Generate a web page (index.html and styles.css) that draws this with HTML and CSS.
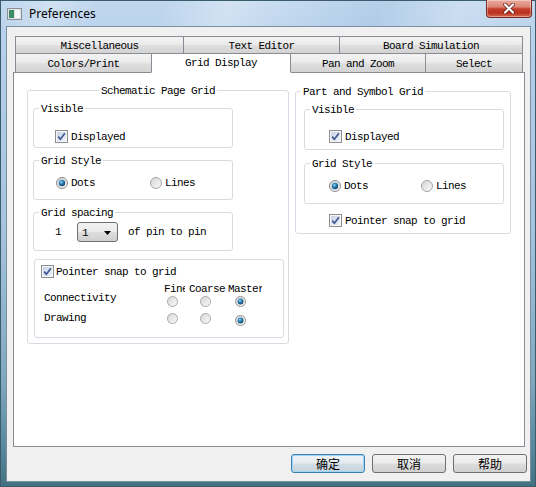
FILE: index.html
```html
<!DOCTYPE html>
<html>
<head>
<meta charset="utf-8">
<title>Preferences</title>
<link rel="stylesheet" href="styles.css">
</head>
<body>
<svg class="defs" width="0" height="0" aria-hidden="true">
  <defs>
    <linearGradient id="cbfill" x1="0" y1="0" x2="1" y2="1">
      <stop offset="0" stop-color="#c9d3e6"/>
      <stop offset="1" stop-color="#eef2f8"/>
    </linearGradient>
    <linearGradient id="radbg" x1="0" y1="0" x2="1" y2="1">
      <stop offset="0" stop-color="#d4d4d4"/>
      <stop offset="1" stop-color="#fbfbfb"/>
    </linearGradient>
    <radialGradient id="raddot" cx="0.4" cy="0.35" r="0.7">
      <stop offset="0" stop-color="#8fd8f5"/>
      <stop offset="0.45" stop-color="#2a80b3"/>
      <stop offset="1" stop-color="#123f63"/>
    </radialGradient>
    <symbol id="cbx" viewBox="0 0 13 13">
      <rect x="0.5" y="0.5" width="12" height="12" fill="#f6f6f6" stroke="#8e8f8f"/>
      <rect x="2" y="2" width="9" height="9" fill="url(#cbfill)"/>
      <path d="M3.2 6.6 L5.4 9.2 L9.9 3.3" stroke="#3e5591" stroke-width="1.7" fill="none"/>
    </symbol>
    <symbol id="radon" viewBox="0 0 12 12">
      <circle cx="6" cy="6" r="5.5" fill="url(#radbg)" stroke="#8c8c8c"/>
      <circle cx="6" cy="6" r="3.2" fill="url(#raddot)"/>
    </symbol>
    <symbol id="radoff" viewBox="0 0 12 12">
      <circle cx="6" cy="6" r="5.5" fill="url(#radbg)" stroke="#a4a4a4"/>
    </symbol>
  </defs>
</svg>

<div class="window">
  <div class="titlebar">
    <svg class="app-icon" width="15" height="12" viewBox="0 0 15 12">
      <rect x="0.5" y="0.5" width="14" height="11" fill="#dfe3e6" stroke="#8b9197"/>
      <rect x="2" y="2" width="5" height="8" fill="#3d8d68"/>
      <rect x="8" y="2" width="5" height="8" fill="#f5f7f8"/>
    </svg>
    <span class="title">Preferences</span>
    <div class="close">
      <svg width="12" height="11" viewBox="0 0 12 11">
        <path d="M2 1.5 L10 9.5 M10 1.5 L2 9.5" stroke="#5a1a14" stroke-width="3.6" stroke-linecap="round"/>
        <path d="M2 1.5 L10 9.5 M10 1.5 L2 9.5" stroke="#ffffff" stroke-width="2.2" stroke-linecap="round"/>
      </svg>
    </div>
  </div>

  <div class="client">
    <div class="tabwidget">
      <div class="tabrow">
        <div class="tab w-misc">Miscellaneous</div>
        <div class="tab w-text">Text Editor</div>
        <div class="tab w-board">Board Simulation</div>
      </div>
      <div class="tabrow row2">
        <div class="tab w-colors">Colors/Print</div>
        <div class="tab selected w-grid">Grid Display</div>
        <div class="tab w-pan">Pan and Zoom</div>
        <div class="tab w-select">Select</div>
      </div>

      <div class="pane">
        <div class="group group-left">
          <div class="gtitle center">Schematic Page Grid</div>

          <div class="box box-vis-l">
            <div class="gtitle">Visible</div>
            <div class="checkrow cr-l"><svg class="cb"><use href="#cbx"/></svg><span>Displayed</span></div>
          </div>

          <div class="box box-style-l">
            <div class="gtitle">Grid Style</div>
            <div class="radiorow rr-l">
              <div class="opt"><svg class="rb"><use href="#radon"/></svg><span>Dots</span></div>
              <div class="opt"><svg class="rb"><use href="#radoff"/></svg><span>Lines</span></div>
            </div>
          </div>

          <div class="box box-spacing">
            <div class="gtitle">Grid spacing</div>
            <div class="spacingrow">
              <span class="num">1</span>
              <div class="combo"><span>1</span><svg width="7" height="4" viewBox="0 0 7 4"><path d="M0 0 H7 L3.5 4 Z" fill="#000"/></svg></div>
              <span class="ofpin">of pin to pin</span>
            </div>
          </div>

          <div class="box box-snap">
            <div class="checkrow cr-snap"><svg class="cb"><use href="#cbx"/></svg><span>Pointer snap to grid</span></div>
            <div class="matrix">
              <span class="hdr h-fine">Fine</span>
              <span class="hdr h-coarse">Coarse</span>
              <span class="hdr h-master">Master</span>
              <span class="mlabel m-conn">Connectivity</span>
              <svg class="rs c-fine"><use href="#radoff"/></svg>
              <svg class="rs c-coarse"><use href="#radoff"/></svg>
              <svg class="rs c-master"><use href="#radon"/></svg>
              <span class="mlabel m-draw">Drawing</span>
              <svg class="rs c-fine"><use href="#radoff"/></svg>
              <svg class="rs c-coarse"><use href="#radoff"/></svg>
              <svg class="rs c-master lower"><use href="#radon"/></svg>
            </div>
          </div>
        </div>

        <div class="group group-right">
          <div class="gtitle left">Part and Symbol Grid</div>

          <div class="box box-vis-r">
            <div class="gtitle">Visible</div>
            <div class="checkrow cr-r"><svg class="cb"><use href="#cbx"/></svg><span>Displayed</span></div>
          </div>

          <div class="box box-style-r">
            <div class="gtitle">Grid Style</div>
            <div class="radiorow rr-r">
              <div class="opt"><svg class="rb"><use href="#radon"/></svg><span>Dots</span></div>
              <div class="opt"><svg class="rb"><use href="#radoff"/></svg><span>Lines</span></div>
            </div>
          </div>

          <div class="checkrow cr-psnap"><svg class="cb"><use href="#cbx"/></svg><span>Pointer snap to grid</span></div>
        </div>
      </div>
    </div>

    <div class="buttons">
      <button class="btn default">确定</button>
      <button class="btn">取消</button>
      <button class="btn">帮助</button>
    </div>
  </div>
</div>
</body>
</html>
```

FILE: styles.css
```css
* { box-sizing: border-box; }
html, body { margin: 0; padding: 0; }
body {
  width: 536px;
  height: 487px;
  overflow: hidden;
  background: #fff;
  font-family: "Liberation Mono", "DejaVu Sans Mono", monospace;
  font-size: 11px;
  letter-spacing: -0.6px;
  line-height: 12px;
  color: #000;
}
.defs { display: block; width: 0; height: 0; overflow: hidden; }

.window {
  width: 536px;
  height: 487px;
  border: 1px solid #3a5c6d;
  background: linear-gradient(180deg, #c0d7ee 0px, #b4cee9 60px, #a6c3df 230px, #7fa8bd 380px, #56879a 450px, #42707f 487px);
  display: flex;
  flex-direction: column;
}

.titlebar {
  height: 25px;
  display: flex;
  align-items: center;
  padding-left: 6px;
  background: linear-gradient(112deg, rgba(255,255,255,0) 0%, rgba(255,255,255,0.25) 10%, rgba(255,255,255,0) 18%, rgba(255,255,255,0) 30%, rgba(255,255,255,0.3) 42%, rgba(255,255,255,0.05) 55%, rgba(120,160,210,0.15) 70%, rgba(255,255,255,0.2) 85%, rgba(255,255,255,0) 100%);
}
.app-icon { display: block; flex: none; }
.title {
  margin-left: 7px;
  font-family: "Noto Sans", "Open Sans", sans-serif;
  font-size: 12px;
  letter-spacing: 0;
  line-height: 16px;
  color: #000;
  margin-top: 1px;
}
.close {
  margin-left: auto;
  margin-right: 3px;
  align-self: flex-start;
  margin-top: -1px;
  width: 46px;
  height: 18px;
  border: 1px solid #7a2a22;
  border-top: none;
  border-radius: 0 0 4px 4px;
  background: linear-gradient(180deg, #e9ab9e 0%, #dc8778 40%, #c43f30 52%, #b9311f 75%, #d86a52 100%);
  box-shadow: inset 0 0 0 1px rgba(255,255,255,0.35);
  display: flex;
  align-items: center;
  justify-content: center;
}

.client {
  margin-left: 5px;
  width: 525px;
  height: 456px;
  border: 1px solid #7990a0;
  background: #f0f0f0;
  display: flex;
  flex-direction: column;
}

.tabwidget {
  margin-left: 6px;
  margin-top: 9px;
  width: 512px;
}
.tabrow {
  display: flex;
  padding-left: 2px;
}
.row2 { margin-top: -1px; margin-bottom: -1px; }
.tab {
  height: 18px;
  border: 1px solid #898c95;
  margin-left: -1px;
  display: flex;
  align-items: center;
  justify-content: center;
  padding-top: 2px;
  background: linear-gradient(180deg, #f3f3f3 0%, #ebebeb 45%, #dedede 55%, #d3d3d3 100%);
  white-space: nowrap;
}
.tab:first-child { margin-left: 0; }
.row2 .tab { height: 20px; }
.tab.selected {
  position: relative;
  z-index: 1;
  background: #fff;
  border-bottom-color: #fff;
  padding-top: 0;
}
.w-misc { width: 169px; }
.w-text { width: 157px; }
.w-board { width: 184px; }
.w-colors { width: 137px; }
.w-grid { width: 140px; }
.w-pan { width: 136px; }
.w-select { width: 98px; }

.pane {
  height: 375px;
  border: 1px solid #898c95;
  background: #fff;
  display: flex;
  align-items: flex-start;
  gap: 6px;
  padding: 17px 0 0 13px;
}

.group, .box {
  border: 1px solid #d6dce1;
  border-radius: 3px;
  background: #fff;
}
.group-left { width: 262px; height: 254px; padding: 0 5px; }
.group-right { width: 216px; height: 143px; margin-top: 1px; padding: 0 6px 0 8px; }

.gtitle {
  width: fit-content;
  height: 12px;
  line-height: 12px;
  margin-top: -6px;
  margin-left: 5px;
  padding: 0 2px;
  background: #fff;
  white-space: nowrap;
}
.gtitle.center { margin-left: auto; margin-right: auto; }
.gtitle.left { margin-left: -3px; }

.box { width: 200px; }
.box-vis-l { margin-top: 11px; height: 40px; }
.box-style-l { margin-top: 12px; height: 40px; }
.box-spacing { margin-top: 12px; height: 39px; }
.box-snap { margin-top: 8px; margin-left: 1px; width: 250px; height: 79px; }
.box-vis-r { margin-top: 11px; height: 41px; }
.box-style-r { margin-top: 13px; height: 41px; }

.checkrow {
  display: flex;
  align-items: center;
  gap: 3px;
  height: 13px;
  white-space: nowrap;
}
.cb { display: block; width: 13px; height: 13px; flex: none; }
.cr-l { margin-top: 15px; padding-left: 21px; }
.cr-r { margin-top: 14px; padding-left: 24px; }
.cr-snap { margin-top: 5px; padding-left: 6px; gap: 2px; }
.cr-psnap { margin-top: 10px; padding-left: 25px; }

.radiorow {
  display: grid;
  height: 12px;
  margin-top: 10px;
}
.rr-l { grid-template-columns: 94px auto; padding-left: 22px; }
.rr-r { grid-template-columns: 92px auto; padding-left: 24px; }
.opt { display: flex; align-items: center; gap: 3px; }
.rb { display: block; width: 12px; height: 12px; flex: none; }

.spacingrow {
  display: flex;
  align-items: center;
  height: 20px;
  margin-top: 3px;
  padding-left: 21px;
}
.num { width: 6px; }
.combo {
  margin-left: 16px;
  width: 41px;
  height: 20px;
  border: 1px solid #707070;
  border-radius: 3px;
  background: linear-gradient(180deg, #f2f2f2 0%, #ebebeb 48%, #dddddd 52%, #cfcfcf 100%);
  display: flex;
  align-items: center;
  justify-content: space-between;
  padding: 1px 6px 0 4px;
}
.combo svg { display: block; }
.ofpin { margin-left: 10px; }

.matrix {
  display: grid;
  grid-template-columns: 120px 25px 39px 35px;
  grid-template-rows: 12px 17px 17px;
  margin-top: 5px;
  padding-left: 9px;
}
.hdr { overflow: hidden; white-space: nowrap; grid-row: 1; }
.h-fine { grid-column: 2; width: 21px; }
.h-coarse { grid-column: 3; }
.h-master { grid-column: 4; width: 34px; }
.mlabel { grid-column: 1; align-self: start; }
.m-conn { grid-row: 2; margin-top: -3px; }
.m-draw { grid-row: 3; }
.rs { display: block; width: 11px; height: 11px; margin-top: 1px; }
.c-fine { grid-column: 2; margin-left: 3px; }
.c-coarse { grid-column: 3; margin-left: 11px; }
.c-master { grid-column: 4; margin-left: 7px; }
.rs.lower { margin-top: 3px; }

.buttons {
  display: flex;
  justify-content: flex-end;
  gap: 7px;
  margin-top: 7px;
  padding-right: 3px;
}
.btn {
  width: 74px;
  height: 19px;
  padding: 0;
  margin: 0;
  border: 1px solid #707070;
  border-radius: 3px;
  background: linear-gradient(180deg, #f2f2f2 0%, #ebebeb 48%, #dddddd 52%, #cfcfcf 100%);
  font-family: "Noto Sans CJK SC", "Noto Sans", sans-serif;
  font-size: 12px;
  letter-spacing: 0;
  line-height: 17px;
  color: #000;
}
.btn.default {
  border-color: #3c7fb1;
  box-shadow: inset 0 0 0 1px #9ed6f5;
  background: linear-gradient(180deg, #eef4f8 0%, #e3ebf1 48%, #d3dde5 52%, #c8d3dc 100%);
}
```
